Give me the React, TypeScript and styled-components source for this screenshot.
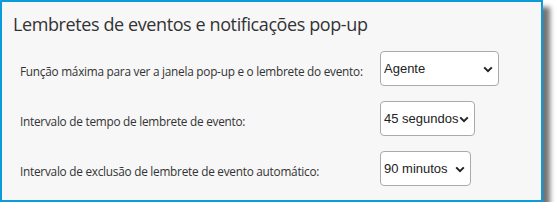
import React from 'react'
import styled, { createGlobalStyle } from 'styled-components'

const GlobalStyle = createGlobalStyle`
  html, body {
    margin: 0;
    padding: 0;
    background: #ffffff;
  }
`

const rows = [
  {
    label: 'Função máxima para ver a janela pop-up e o lembrete do evento:',
    value: 'Agente',
    options: ['Agente', 'Supervisor', 'Administrador'],
    width: 119,
  },
  {
    label: 'Intervalo de tempo de lembrete de evento:',
    value: '45 segundos',
    options: ['15 segundos', '30 segundos', '45 segundos', '60 segundos'],
    width: 95,
  },
  {
    label: 'Intervalo de exclusão de lembrete de evento automático:',
    value: '90 minutos',
    options: ['30 minutos', '60 minutos', '90 minutos', '120 minutos'],
    width: 91,
  },
]

const Chevron = () => (
  <ChevronIcon width="10" height="7" viewBox="0 0 10 7" aria-hidden>
    <path d="M1.2 1.4 L5 5.2 L8.8 1.4" fill="none" stroke="#222" strokeWidth="2" />
  </ChevronIcon>
)

const App = () => {
  return (
    <>
      <GlobalStyle />
      <Panel>
        <Title>Lembretes de eventos e notificações pop-up</Title>
        <Settings>
          {rows.map((row) => (
            <React.Fragment key={row.label}>
              <Label>{row.label}</Label>
              <SelectWrap $width={row.width}>
                <Select defaultValue={row.value}>
                  {row.options.map((o) => (
                    <option key={o}>{o}</option>
                  ))}
                </Select>
                <Chevron />
              </SelectWrap>
            </React.Fragment>
          ))}
        </Settings>
      </Panel>
    </>
  )
}

export default App

const Panel = styled.div`
  box-sizing: border-box;
  width: 543px;
  height: 202px;
  border: 2px solid #0b9bd8;
  background: #f7f7f7;
  box-shadow: 7px 7px 5px rgba(0, 0, 0, 0.55);
  padding: 9px 10px 0 11px;
  font-family: 'Open Sans', 'Noto Sans', sans-serif;
  color: #333;
`

const Title = styled.h2`
  margin: 0;
  font-size: 18px;
  font-weight: 400;
  line-height: 26px;
  letter-spacing: -0.4px;
  color: #333;
  white-space: nowrap;
`

const Settings = styled.div`
  display: grid;
  grid-template-columns: 360px auto;
  grid-auto-rows: 35px;
  row-gap: 15px;
  align-items: center;
  margin-top: 14px;
  padding-left: 7px;
`

const Label = styled.label`
  font-size: 11.8px;
  letter-spacing: -0.25px;
  color: #333;
  white-space: nowrap;
  padding-top: 4px;
`

const SelectWrap = styled.div<{ $width: number }>`
  position: relative;
  width: ${(p) => p.$width}px;
  height: 35px;
`

const Select = styled.select`
  appearance: none;
  box-sizing: border-box;
  width: 100%;
  height: 100%;
  border: 1px solid #aaa;
  border-radius: 4px;
  background: #fff;
  font-family: 'Liberation Sans', Arial, sans-serif;
  font-size: 13px;
  color: #222;
  padding: 0 14px 0 3px;
  outline: none;
`

const ChevronIcon = styled.svg`
  position: absolute;
  right: 6px;
  top: 50%;
  margin-top: -3px;
  pointer-events: none;
`
